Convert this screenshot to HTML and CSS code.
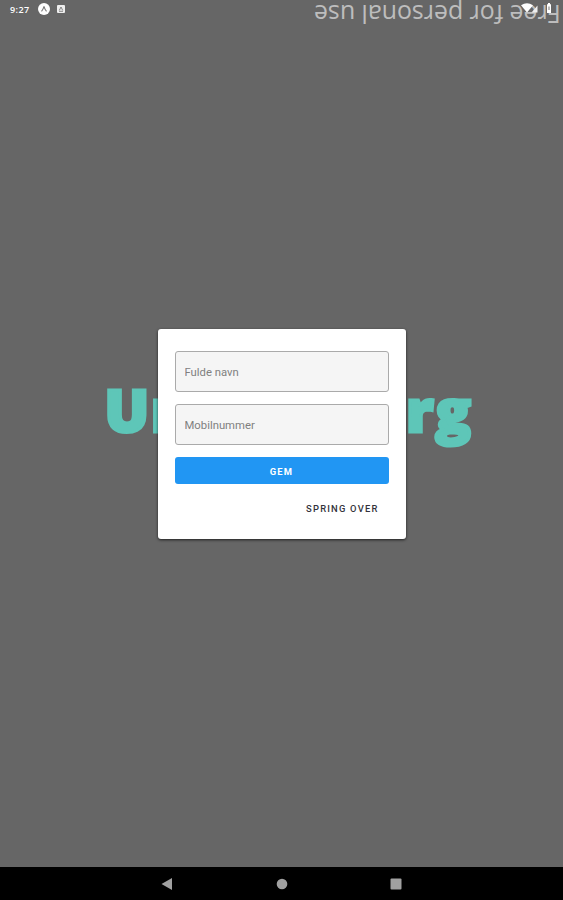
FILE: index.html
```
<!DOCTYPE html>
<html lang="da">

<head>
  <meta charset="UTF-8">
  <title>Opret profil</title>
  <meta name="viewport" content="width=device-width, initial-scale=1.0">
  <link rel="stylesheet" href="styles.css">
</head>

<body>
<div class="statusbar">
  <span class="clock">9:27</span>
  <svg class="icon-app" width="12" height="12" viewBox="0 0 12 12">
    <circle cx="6" cy="6" r="6" fill="#fff"/>
    <path d="M3.5 8.4 Q5.2 6.5 6 3.4 Q6.8 6.5 8.5 8.4" fill="none" stroke="#777" stroke-width="1.1"/>
  </svg>
  <svg class="icon-box" width="8" height="8" viewBox="0 0 8 8">
    <rect width="8" height="8" rx="1" fill="#eee"/>
    <path d="M2.3 5.4 L4 2 L5.7 5.4 M2 6.3 H6" fill="none" stroke="#777" stroke-width=".9"/>
  </svg>
  <svg class="icon-status" width="32" height="12" viewBox="0 0 32 12">
    <path d="M0 2.2 Q6 -1.6 12 2.2 L6 9.6 Z" fill="#fff"/>
    <path d="M16.5 2.5 V9.5 H10.5 Z" fill="#eee"/>
    <path d="M26 1.2 H27 V0 H29 V1.2 H30 V10 H26 Z" fill="#fff"/>
    <path d="M28 3.5 V7" fill="none" stroke="#777" stroke-width="1"/>
  </svg>
</div>
<div class="watermark">Free for personal use</div>

<div class="content">
  <div class="logo"><span>Un</span><span>rg</span></div>

  <div class="dialog">
    <input type="text" id="navn" placeholder="Fulde navn">
    <input type="text" id="mobil" placeholder="Mobilnummer">
    <button class="gem-btn">GEM</button>
    <button class="skip-btn">SPRING OVER</button>
  </div>
</div>

<div class="navbar">
  <svg width="12" height="12" viewBox="0 0 12 12"><path d="M0.5 6 L11 0 V12 Z" fill="#a0a0a0"/></svg>
  <svg width="12" height="12" viewBox="0 0 12 12"><circle cx="6" cy="6" r="5.3" fill="#a0a0a0"/></svg>
  <svg width="12" height="12" viewBox="0 0 12 12"><rect x="0.5" y="0.5" width="11" height="11" rx="1" fill="#a0a0a0"/></svg>
</div>
</body>
</html>
```

FILE: styles.css
```
* {
  box-sizing: border-box;
}

body {
  margin: 0;
  height: 900px;
  display: flex;
  flex-direction: column;
  overflow: hidden;
  position: relative;
  background-color: #666;
  font-family: Roboto, sans-serif;
}

.statusbar {
  display: flex;
  align-items: center;
  height: 18px;
  padding: 0 10px;
  color: #fff;
  position: relative;
  z-index: 1;
}

.clock {
  width: 28px;
  font-family: "Open Sans", sans-serif;
  font-size: 9px;
  font-weight: 600;
  letter-spacing: 0.4px;
}

.icon-box {
  margin-left: 7px;
}

.icon-status {
  margin-left: auto;
  margin-right: 0;
}

/* upside down over the status bar */
.watermark {
  position: absolute;
  top: -3px;
  right: 2px;
  font-family: "Open Sans", sans-serif;
  font-size: 25px;
  line-height: 35px;
  letter-spacing: -0.05px;
  color: #bdbdbd;
  white-space: nowrap;
  transform: rotate(180deg);
}

.content {
  flex: 1;
  display: grid;
  place-items: center;
}

.content > * {
  grid-area: 1 / 1;
}

.logo {
  display: flex;
  justify-content: space-between;
  width: 368px;
  margin-right: -14px;
  transform: translateY(-34px);
  color: #5ec6b8;
  font-family: "Open Sans", sans-serif;
  font-size: 59px;
  font-weight: 800;
  line-height: 84px;
  letter-spacing: 1.5px;
  -webkit-text-stroke: 3.2px #5ec6b8;
}

.dialog {
  display: flex;
  flex-direction: column;
  width: 248px;
  height: 210px;
  margin-bottom: 18px;
  padding: 22px 17px 0;
  background-color: #fff;
  border-radius: 3px;
  box-shadow: 0 1px 3px rgba(0, 0, 0, 0.7);
  z-index: 1;
}

.dialog input {
  width: 100%;
  height: 41px;
  margin: 0 0 12px;
  padding: 3px 9px 0;
  border: 1px solid #aaa;
  border-radius: 3px;
  background-color: #f5f5f5;
  font-family: Roboto, sans-serif;
  font-size: 11.3px;
}

.dialog input::placeholder {
  color: #808080;
}

.dialog button {
  border: none;
  padding: 0;
  font-family: Roboto, sans-serif;
  font-size: 9.4px;
  letter-spacing: 1.2px;
}

.gem-btn {
  height: 27px;
  border-radius: 3px;
  background-color: #2196f3;
  color: #fff;
  font-weight: 700;
}

.dialog .gem-btn {
  padding-top: 2px;
}

.skip-btn {
  align-self: flex-end;
  height: 27px;
  margin: 11px 10px 0 0;
  background: none;
  color: #33333b;
  font-weight: 500;
}

.navbar {
  display: flex;
  justify-content: space-between;
  align-items: center;
  height: 33px;
  padding: 0 161px;
  background-color: #000;
}
```
